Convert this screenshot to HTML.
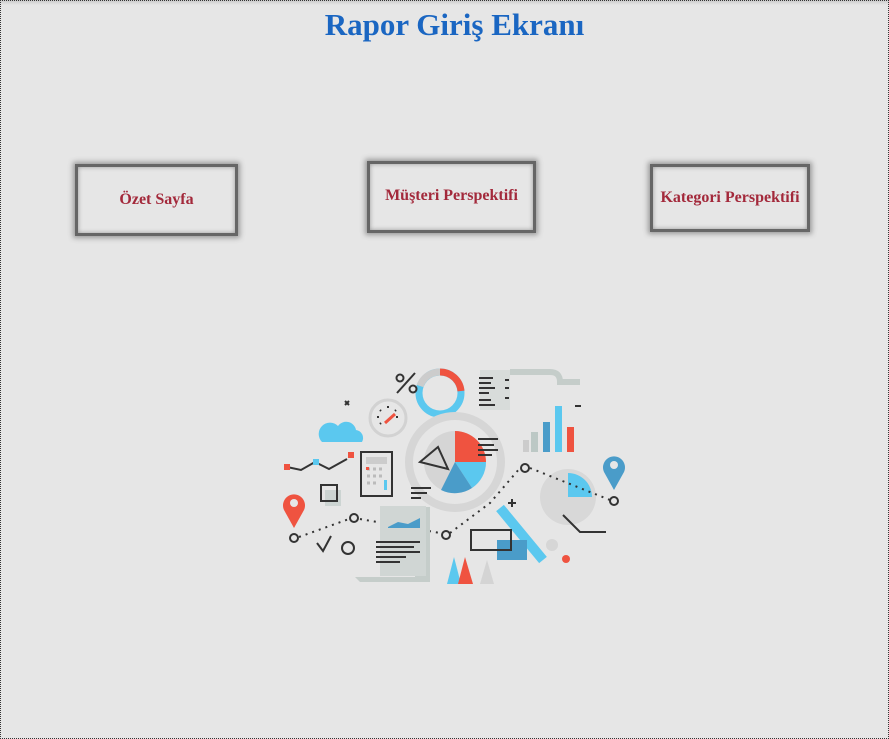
<!DOCTYPE html>
<html><head><meta charset="utf-8"><style>
html,body{margin:0;padding:0}
body{width:889px;height:739px;background:#e6e6e6;position:relative;overflow:hidden;font-family:"Liberation Serif",serif}
.frame{position:absolute;left:0;top:0;width:887px;height:737px;border:1px dotted #333}
.topsh{position:absolute;left:0;top:0;width:889px;height:5px;background:linear-gradient(#c8c8c8,#e6e6e6)}
h1{position:absolute;left:0;width:909px;top:7px;margin:0;text-align:center;color:#1a66c2;font-size:31px;font-weight:bold}
.b{position:absolute;border:3px solid #666;box-shadow:0 0 5px 2px #999, inset 0 0 5px #999;box-sizing:border-box;display:flex;align-items:center;justify-content:center;color:#a3293b;font-weight:bold;font-size:16px}
</style></head><body>
<div class="topsh"></div><div class="frame"></div>
<h1>Rapor Giriş Ekranı</h1>
<div class="b" style="left:75px;top:164px;width:163px;height:72px">Özet Sayfa</div>
<div class="b" style="left:367px;top:161px;width:169px;height:72px;padding-bottom:3px">Müşteri Perspektifi</div>
<div class="b" style="left:650px;top:164px;width:160px;height:68px">Kategori Perspektifi</div>
<svg width="889" height="739" style="position:absolute;left:0;top:0">
<g fill="none" stroke="#333" stroke-width="2">
<path d="M480 370h30v40h-30z" fill="#d8dcda" stroke="none"/>
<path d="M510 372h40q10 0 10 10h20" stroke="#c5cdca" stroke-width="6"/>
<path d="M479 378h14M479 383h12M479 388h16M479 393h10M479 400h12M479 405h16M505 380h4M505 388h4M505 398h4" stroke-width="2"/>
<circle cx="440" cy="393" r="21" stroke="#5bc8ef" stroke-width="7"/>
<path d="M440 372a21 21 0 0 1 21 19" stroke="#ef5340" stroke-width="7"/>
<path d="M440 372a21 21 0 0 0 -20 14" stroke="#ccc" stroke-width="7"/>
<path d="M397 393l18 -20" stroke-width="2"/>
<circle cx="400" cy="378" r="3.5"/><circle cx="413" cy="389" r="3.5"/>
<circle cx="388" cy="418" r="18" stroke="#d2d2d2" stroke-width="3" fill="#e6e6e6"/>
<path d="M385 423l10 -9" stroke="#ef5340" stroke-width="3"/>
<path d="M377 417h2M380 410l1 1M388 406v2M396 410l-1 1M398 417h-2M380 424l1 -1" stroke-width="2"/>
<path d="M345 401l4 4M349 401l-4 4"/>
<path d="M322 442h40a8 8 0 0 0 -6 -12a10 10 0 0 0 -18 -4a8 8 0 0 0 -16 16z" fill="#5bc8ef" stroke="none"/>
<rect x="523" y="440" width="6" height="12" fill="#ccc" stroke="none"/>
<rect x="531" y="432" width="7" height="20" fill="#bcc8c5" stroke="none"/>
<rect x="543" y="422" width="7" height="30" fill="#4a9cc9" stroke="none"/>
<rect x="555" y="406" width="7" height="46" fill="#5bc8ef" stroke="none"/>
<rect x="567" y="427" width="7" height="25" fill="#ef5340" stroke="none"/>
<path d="M575 406h6"/>
<circle cx="455" cy="462" r="46" stroke="#d6d6d6" stroke-width="8"/>
<line x1="500" y1="508" x2="543" y2="560" stroke="#5bc8ef" stroke-width="10"/>
<circle cx="455" cy="462" r="31" fill="#d5d5d5" stroke="none"/>
<path d="M455 462V431a31 31 0 0 1 31 31z" fill="#ef5340" stroke="none"/>
<path d="M455 462h31a31 31 0 0 1 -14 26z" fill="#5bc8ef" stroke="none"/>
<path d="M455 462l17 26a31 31 0 0 1 -31 2z" fill="#4a9cc9" stroke="none"/>
<path d="M420 462l18 -15l10 22z"/>
<path d="M478 439h20M478 445h16M478 450h20M478 455h14"/>
<path d="M411 488h20M411 493h16M411 498h10"/>
<rect x="361" y="452" width="31" height="44" fill="#e6e6e6"/>
<rect x="366" y="457" width="21" height="7" fill="#ccc" stroke="none"/>
<path d="M367 469h3M373 469h3M379 469h3M367 476h3M373 476h3M379 476h3M367 483h3M373 483h3" stroke="#bbb" stroke-width="3"/>
<rect x="384" y="480" width="3" height="10" fill="#5bc8ef" stroke="none"/>
<rect x="366" y="467" width="3" height="3" fill="#ef5340" stroke="none"/>
<rect x="325" y="490" width="16" height="16" fill="#ccd4d2" stroke="none"/>
<rect x="321" y="485" width="16" height="16"/>
<path d="M287 467l14 3l14 -8l14 7l18 -10" stroke="#333"/>
<rect x="284" y="464" width="6" height="6" fill="#ef5340" stroke="none"/>
<rect x="313" y="459" width="6" height="6" fill="#5bc8ef" stroke="none"/>
<rect x="348" y="452" width="6" height="6" fill="#ef5340" stroke="none"/>
<path d="M294 528l-10 -18a11 11 0 1 1 20 0z" fill="#ef5340" stroke="none"/>
<circle cx="294" cy="503" r="4" fill="#e6e6e6" stroke="none"/>
<path d="M614 490l-10 -18a11 11 0 1 1 20 0z" fill="#4a9cc9" stroke="none"/>
<circle cx="614" cy="465" r="4" fill="#e6e6e6" stroke="none"/>
<circle cx="568" cy="497" r="28" fill="#d8d8d8" stroke="none"/>
<path d="M568 497v-24a24 24 0 0 1 24 24z" fill="#5bc8ef" stroke="none"/>
<path d="M563 515l17 17h26"/>
<path d="M299 537l50 -18M360 519l80 14M450 533l40 -30l30 -35M530 468l80 32" stroke-dasharray="2 5"/>
<circle cx="294" cy="538" r="4"/><circle cx="354" cy="518" r="4"/><circle cx="446" cy="535" r="4"/><circle cx="525" cy="468" r="4"/><circle cx="614" cy="501" r="4"/>
<path d="M317 543l6 8l8 -15"/>
<circle cx="348" cy="548" r="6"/>
<path d="M355 577h60v-70h15v75h-70z" fill="#c5cdca" stroke="none"/>
<rect x="380" y="506" width="46" height="70" fill="#d0d6d4" stroke="none"/>
<path d="M388 527l10 -5l10 2l12 -6v10h-32z" fill="#4a9cc9" stroke="none"/>
<path d="M376 542h44M376 547h38M376 552h44M376 557h30M376 562h24" stroke-width="2"/>
<rect x="497" y="540" width="30" height="20" fill="#4a9cc9" stroke="none"/>
<rect x="471" y="530" width="40" height="20" fill="none"/>
<path d="M508 503h8M512 499v8"/>
<circle cx="552" cy="545" r="6" fill="#d6d6d6" stroke="none"/>
<circle cx="566" cy="559" r="4" fill="#ef5340" stroke="none"/>
<path d="M447 584l7 -27l7 27z" fill="#5bc8ef" stroke="none"/>
<path d="M458 584l7 -27l8 27z" fill="#ef5340" stroke="none"/>
<path d="M480 584l7 -24l7 24z" fill="#d4d4d4" stroke="none"/>
</g></svg>
</body></html>
